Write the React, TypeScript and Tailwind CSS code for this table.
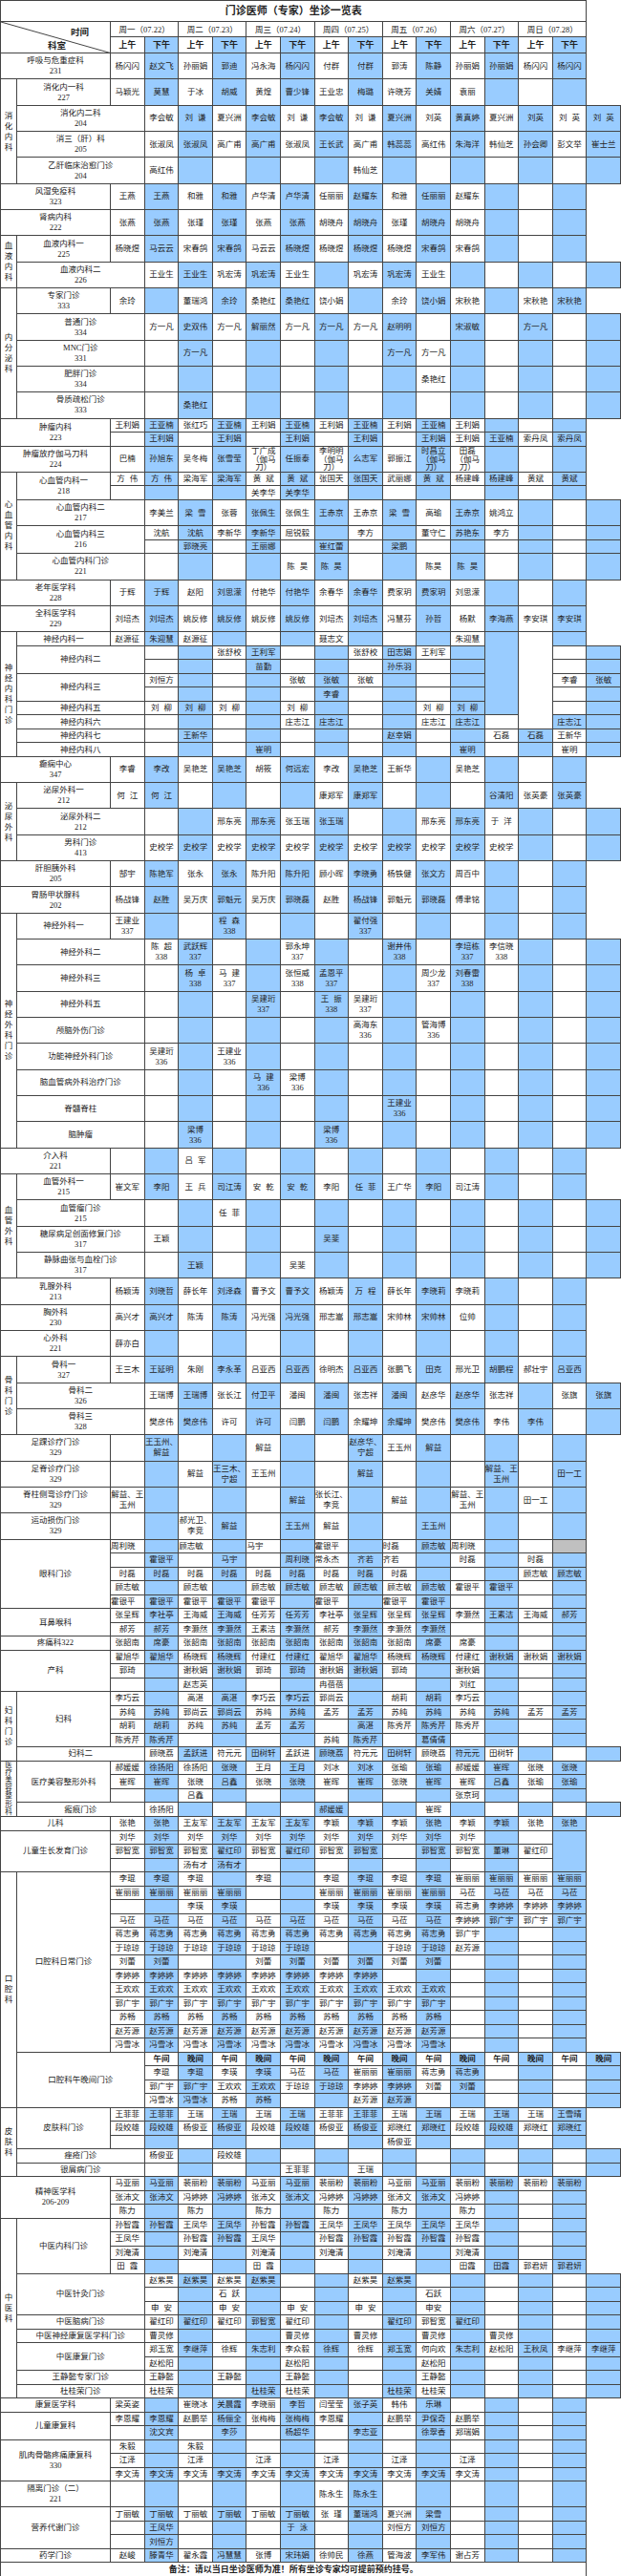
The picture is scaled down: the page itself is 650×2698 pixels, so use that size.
import clsx from "clsx";

type Item = { label: string; rows: string[]; s?: boolean };
type Group = { group: string; items: Item[]; tight?: boolean };
type Block = Item | Group;

const days = [
  "周一（07.22）",
  "周二（07.23）",
  "周三（07.24）",
  "周四（07.25）",
  "周五（07.26）",
  "周六（07.27）",
  "周日（07.28）",
];

const rep = (name: string, n: number) => Array(n).fill(name).join(" ");

// "-" empty, "^" covered by rowspan above, "#N" empty cell spanning N rows,
// "%" grey cell, "_" gap inside a name, "/" line break, "<" left aligned, "*" bold
const blocks: Block[] = [
  { label: "呼吸与危重症科/231", rows: ["杨闪闪 赵文飞 孙丽娟 郭迪 冯永海 杨闪闪 付群 付群 郭涛 陈静 孙丽娟 孙丽娟 杨闪闪 杨闪闪"] },
  {
    group: "消化内科",
    items: [
      { label: "消化内一科/227", rows: ["马颖光 莫慧 于冰 胡威 黄煌 曹少锋 王业忠 梅璐 许晓芳 关婧 袁丽"] },
      { label: "消化内二科/204", rows: ["李会敏 刘_谦 夏兴洲 李会敏 刘_谦 李会敏 刘_谦 夏兴洲 刘英 黄真婷 夏兴洲 刘英 刘_英 刘_英"] },
      { label: "消三（肝）科/205", rows: ["张淑凤 张淑凤 高广甫 高广甫 张淑凤 王长武 高广甫 韩蕊蕊 高红伟 朱海洋 韩仙芝 孙会卿 彭文举 崔士兰"] },
      { label: "乙肝临床治愈门诊/204", rows: ["高红伟 - - - - - 韩仙芝"] },
    ],
  },
  { label: "风湿免疫科/323", rows: ["王燕 王燕 和雅 和雅 卢华清 卢华清 任丽丽 赵耀东 和雅 任丽丽 赵耀东"] },
  { label: "肾病内科/222", rows: ["张燕 张燕 张瑾 张瑾 张燕 张燕 胡晓舟 胡晓舟 张瑾 胡晓舟 胡晓舟"] },
  {
    group: "血液内科",
    items: [
      { label: "血液内科一/225", rows: ["杨晓煜 马云云 宋春鸽 宋春鸽 马云云 杨晓煜 杨晓煜 杨晓煜 杨晓煜 宋春鸽 宋春鸽"] },
      { label: "血液内科二/226", rows: ["王业生 王业生 巩宏涛 巩宏涛 王业生 - 巩宏涛 巩宏涛 王业生"] },
    ],
  },
  {
    group: "内分泌科",
    items: [
      { label: "专家门诊/333", rows: ["余玲 - 董瑞鸿 余玲 桑艳红 桑艳红 饶小娟 - 余玲 饶小娟 宋秋艳 - 宋秋艳 宋秋艳"] },
      { label: "普通门诊/334", rows: ["方一凡 史双伟 方一凡 解丽然 方一凡 方一凡 方一凡 赵明明 - 宋淑敏 - 方一凡"] },
      { label: "MNC门诊/331", rows: ["- 方一凡 - - - - - 方一凡 方一凡"] },
      { label: "肥胖门诊/334", rows: ["- - - - - - - - 桑艳红"] },
      { label: "骨质疏松门诊/333", rows: ["- 桑艳红"] },
    ],
  },
  {
    label: "肿瘤内科/223",
    rows: [
      "王利娟 王亚楠 张红巧 王亚楠 王利娟 王亚楠 王利娟 王亚楠 王利娟 王亚楠 王利娟",
      "- 王利娟 - 王利娟 - 王利娟 - 王利娟 - 王利娟 王利娟 王亚楠 索丹凤 索丹凤",
    ],
  },
  {
    label: "肿瘤放疗伽马刀科/224",
    rows: ["巴楠 孙旭东 吴冬梅 张雪莹 丁广成/（伽马/刀） 任振泰 李明明/（伽马/刀） 么志军 郭振江 时昌立/（伽马/刀） 田磊/（伽马/刀）"],
  },
  {
    group: "心血管内科",
    items: [
      {
        label: "心血管内科一/218",
        rows: ["方_伟 方_伟 梁海军 梁海军 黄_斌 黄_斌 张国天 张国天 武丽娜 黄_斌 杨建峰 杨建峰 黄斌 黄斌", "- - - - 关李华 关李华"],
      },
      { label: "心血管内科二/217", rows: ["李美兰 梁_雪 张蓉 张佩生 张佩生 王赤京 王赤京 梁_雪 高瑜 王赤京 姚鸿立"] },
      {
        label: "心血管内科三/216",
        rows: ["沈航 沈航 李新华 李新华 屈锐毅 - 李方 - 董守仁 苏艳东 李方", "- 郭晓亮 - 王丽娜 - 崔红蕾 - 梁鹏"],
      },
      { label: "心血管内科门诊/221", rows: ["- - - - 陈_昊 陈_昊 - - 陈昊 陈_昊"] },
    ],
  },
  { label: "老年医学科/228", rows: ["于辉 于辉 赵阳 刘思濛 付艳华 付艳华 余春华 余春华 费家玥 费家玥 刘思濛"] },
  { label: "全科医学科/229", rows: ["刘培杰 刘培杰 姚反修 姚反修 姚反修 姚反修 刘培杰 刘培杰 冯慧芬 孙哲 杨默 李海燕 李安琪 李安琪"] },
  {
    group: "神经内科门诊",
    items: [
      { label: "神经内科一", s: true, rows: ["赵源征 朱迎慧 赵源征 - - - 聂志文 - - - 朱迎慧 #6 #7 -"] },
      {
        label: "神经内科二",
        rows: ["- - 张舒校 王利军 - - 张舒校 田志娟 王利军 - - ^ ^ -", "- - - 苗勤 - - - 孙乐羽 - - - ^ ^ -"],
      },
      {
        label: "神经内科三",
        rows: ["刘恒方 - - - 张敏 张敏 张敏 - - - 李睿 ^ ^ 张敏", "- - - - - 李睿 - - - - - ^ ^ -"],
      },
      { label: "神经内科五", s: true, rows: ["刘_柳 刘_柳 刘_柳 - 刘_柳 - - - 刘_柳 刘_柳 - ^ ^ -"] },
      { label: "神经内科六", s: true, rows: ["- - - - 庄志江 庄志江 - - 庄志江 庄志江 - 庄志江 ^ -"] },
      { label: "神经内科七", s: true, rows: ["- 王新华 - - - - - 赵幸娟 - - 石磊 石磊 王新华 -"] },
      { label: "神经内科八", s: true, rows: ["- - - 崔明 - - - - - 崔明 - - 崔明 -"] },
    ],
  },
  { label: "癫痫中心/347", rows: ["李睿 李改 吴艳芝 吴艳芝 胡筱 何远宏 李改 吴艳芝 王新华 - 吴艳芝"] },
  {
    group: "泌尿外科",
    items: [
      { label: "泌尿外科一/212", rows: ["何_江 何_江 - - - - 康郑军 康郑军 - - - 谷清阳 张英豪 张英豪"] },
      { label: "泌尿外科二/212", rows: ["- - 邢东亮 邢东亮 张玉瑞 张玉瑞 - - 邢东亮 邢东亮 于_洋"] },
      { label: "男科门诊/413", rows: [rep("史校学", 11)] },
    ],
  },
  { label: "肝胆胰外科/205", rows: ["郜宇 陈艳军 张永 张永 陈升阳 陈升阳 顾小晖 李晓勇 杨铁健 张文方 周百中"] },
  { label: "胃肠甲状腺科/202", rows: ["杨战锋 赵胜 吴万庆 郭魁元 吴万庆 郭晓磊 赵胜 杨战锋 郭魁元 郭晓磊 傅聿铭"] },
  {
    group: "神经外科门诊",
    items: [
      { label: "神经外科一", rows: ["王建业/337 - - 程_森/338 - - - 翟付强/337"] },
      { label: "神经外科二", rows: ["陈_超/338 武跃辉/337 - - 郭永坤/337 - - 谢井伟/338 - 李培栋/337 李信晓/338"] },
      { label: "神经外科三", rows: ["- 杨_卓/338 马_建/337 - 张恒威/338 孟恩平/337 - - 周少龙/337 刘春雷/338"] },
      { label: "神经外科五", rows: ["- - - 吴建珩/337 - 王_振/338 吴建珩/337"] },
      { label: "颅脑外伤门诊", rows: ["- - - - - - 高海东/336 - 管海博/336"] },
      { label: "功能神经外科门诊", rows: ["吴建珩/336 - 王建业/336"] },
      { label: "脑血管病外科治疗门诊", rows: ["- - - 马_建/336 梁博/336"] },
      { label: "脊髓脊柱", rows: ["- - - - - - - 王建业/336"] },
      { label: "脑肿瘤", rows: ["- 梁博/336 - - - 梁博/336"] },
    ],
  },
  { label: "介入科/221", rows: ["- - 吕_军"] },
  {
    group: "血管外科",
    items: [
      { label: "血管外科一/215", rows: ["崔文军 李阳 王_兵 司江涛 安_乾 安_乾 李阳 任_菲 王广华 李阳 司江涛"] },
      { label: "血管瘤门诊/215", rows: ["- - 任_菲"] },
      { label: "糖尿病足创面修复门诊/317", rows: ["王颖 - - - - 吴斐"] },
      { label: "静脉曲张与血栓门诊/317", rows: ["- 王颖 - - 吴斐"] },
    ],
  },
  { label: "乳腺外科/213", rows: ["杨颖涛 刘晓哲 薛长年 刘泽森 曹予文 曹予文 杨颖涛 万_程 薛长年 李晓莉 李晓莉"] },
  { label: "胸外科/230", rows: ["高兴才 高兴才 陈涛 陈涛 冯光强 冯光强 邢志嵩 邢志嵩 宋帅林 宋帅林 位帅"] },
  { label: "心外科/221", rows: ["薛亦白"] },
  {
    group: "骨科门诊",
    items: [
      { label: "骨科一/327", rows: ["王三木 王延明 朱刚 李永革 吕亚西 吕亚西 徐明杰 吕亚西 张鹏飞 田克 邢光卫 胡鹏程 郝壮宇 吕亚西"] },
      { label: "骨科二/326", rows: ["王瑞博 王瑞博 张长江 付卫平 潘闽 潘闽 张志祥 潘闽 赵彦华 赵彦华 张志祥 - 张旗 张旗"] },
      { label: "骨科三/328", rows: ["樊彦伟 樊彦伟 许可 许可 闫鹏 闫鹏 余耀坤 余耀坤 樊彦伟 樊彦伟 李伟 李伟"] },
    ],
  },
  { label: "足踝诊疗门诊/329", rows: ["- 王玉州、/解益 - - 解益 - - 赵彦华、/宁超 王玉州 解益"] },
  { label: "足脊诊疗门诊/329", rows: ["- - 解益 王三木、/宁超 王玉州 - - 解益 - - - 解益、王/玉州 - 田一工"] },
  { label: "脊柱侧弯诊疗门诊/329", rows: ["解益、王/玉州 - - - - 解益 张长江、/李竞 - 解益 - 解益、王/玉州 - 田一工 -"] },
  { label: "运动损伤门诊/329", rows: ["- - 郝光卫、/李竞 解益 - 王玉州 解益 - - 王玉州"] },
  {
    label: "眼科门诊",
    rows: [
      "<周利晓 - <顾志敏 - <马宇 - <霍银平 - <时磊 顾志敏 <周利晓 - - %",
      "- 霍银平 - 马宇 - 周利晓 <常永杰 齐若 <齐若 - 时磊 - 时磊 -",
      `${rep("时磊", 9)} - - - 顾志敏 顾志敏`,
      "顾志敏 - 顾志敏 - 顾志敏 顾志敏 顾志敏 顾志敏 顾志敏 顾志敏 霍银平 霍银平",
      "<霍银平 霍银平 霍银平 霍银平 霍银平 - <霍银平 - <霍银平 霍银平",
    ],
  },
  {
    label: "耳鼻喉科",
    rows: [
      "张呈辉 李社亭 王海威 王海威 任芳芳 任芳芳 李社亭 张呈辉 张呈辉 张呈辉 李灏然 王素洁 王海威 郝芳",
      "郝芳 郝芳 李灏然 李灏然 王素洁 李灏然 郝芳 李灏然 李灏然 李灏然",
    ],
  },
  { label: "疼痛科322", s: true, rows: ["张韶南 席豪 张韶南 张韶南 张韶南 张韶南 张韶南 张韶南 张韶南 席豪 席豪"] },
  {
    label: "产科",
    rows: [
      "翟旭华 翟旭华 杨晓辉 杨晓辉 付建红 付建红 翟旭华 翟旭华 杨晓辉 杨晓辉 付建红 谢秋娟 谢秋娟 谢秋娟",
      "郭琦 - 谢秋娟 谢秋娟 郭琦 郭琦 谢秋娟 谢秋娟 郭琦 - 谢秋娟",
      "- - 赵志英 - - - 冉蓓蓓 - - - 刘红",
    ],
  },
  {
    group: "妇科门诊",
    items: [
      {
        label: "妇科",
        rows: [
          "李巧云 - 高湛 高湛 李巧云 李巧云 郭尚云 - 胡莉 胡莉 李巧云",
          "苏纯 苏纯 郭尚云 郭尚云 苏纯 苏纯 孟芳 孟芳 苏纯 苏纯 苏纯 苏纯 孟芳 孟芳",
          "胡莉 胡莉 苏纯 苏纯 孟芳 孟芳 - 高湛 陈秀芹 陈秀芹 陈秀芹",
          "陈秀芹 陈秀芹 - - - - 苏纯 陈秀芹 - 葛倩倩",
        ],
      },
      { label: "妇科二", s: true, rows: ["顾晓荔 孟跃进 符元元 田树轩 孟跃进 顾晓荔 符元元 田树轩 顾晓荔 符元元 田树轩"] },
    ],
  },
  {
    group: "医疗美容整形科",
    tight: true,
    items: [
      {
        label: "医疗美容整形外科",
        rows: [
          "郝媛媛 徐扬阳 徐扬阳 张晓 王月 王月 刘冰 刘冰 张瑜 张瑜 郝媛媛 崔晖 张晓 张晓",
          "崔晖 崔晖 张晓 吕鑫 张晓 张晓 崔晖 崔晖 张晓 崔晖 崔晖 吕鑫 张瑜 张瑜",
          "- - 吕鑫 - - - - - - - 张京珂",
        ],
      },
      { label: "瘢痕门诊", s: true, rows: ["徐扬阳 - - - - 郝媛媛 - - 崔晖"] },
    ],
  },
  { label: "儿科", s: true, rows: ["张艳 张艳 王友军 王友军 王友军 王友军 李颖 李颖 李颖 张艳 李颖 李颖 张艳 张艳"] },
  {
    label: "儿童生长发育门诊",
    rows: [
      `${rep("刘华", 11)} - - #3`,
      "郭智宽 郭智宽 郭智宽 翟红印 郭智宽 翟红印 郭智宽 郭智宽 - 郭智宽 郭智宽 董琳 翟红印 ^",
      "- - 汤有才 汤有才 - - - - - - - - - ^",
    ],
  },
  {
    group: "口腔科",
    items: [
      {
        label: "口腔科日常门诊",
        rows: [
          "李琨 李琨 李琨 - 李琨 - 李琨 李琨 李琨 李琨 崔丽丽 崔丽丽 崔丽丽 崔丽丽",
          "崔丽丽 崔丽丽 崔丽丽 崔丽丽 - - 崔丽丽 崔丽丽 崔丽丽 崔丽丽 马莅 马莅 马莅 马莅",
          "- - 李瑛 李瑛 - - 李瑛 李瑛 李瑛 李瑛 蒋志勇 李婷婷 李婷婷 李婷婷",
          `${rep("马莅", 10)} 李婷婷 郭广宇 郭广宇 郭广宇`,
          `${rep("蒋志勇", 10)} 郭广宇`,
          `${rep("于琼琼", 6)} - - 于琼琼 于琼琼 赵芳源`,
          "刘蕾 刘蕾 - - 刘蕾 刘蕾 刘蕾 刘蕾 刘蕾 刘蕾",
          rep("李婷婷", 8),
          rep("王欢欢", 10),
          rep("郭广宇", 10),
          rep("苏畅", 10),
          rep("赵芳源", 10),
          rep("冯雪冰", 10),
        ],
      },
      {
        label: "口腔科午晚间门诊",
        rows: [
          rep("*午间 *晚间", 7),
          "李琨 李琨 李瑛 李瑛 马莅 马莅 崔丽丽 崔丽丽 蒋志勇 蒋志勇",
          "郭广宇 郭广宇 王欢欢 王欢欢 于琼琼 于琼琼 李婷婷 李婷婷 刘蕾 刘蕾",
          "冯雪冰 冯雪冰 苏畅 苏畅 - - 赵芳源 赵芳源",
        ],
      },
    ],
  },
  {
    group: "皮肤科",
    items: [
      {
        label: "皮肤科门诊",
        rows: [
          "王菲菲 王菲菲 王瑞 王瑞 王瑞 王瑞 王菲菲 王菲菲 王瑞 王瑞 王瑞 王瑞 王瑞 王雪晴",
          "段姣雄 段姣雄 杨俊亚 杨俊亚 段姣雄 段姣雄 杨俊亚 杨俊亚 郑晓红 郑晓红 段姣雄 段姣雄 郑晓红 郑晓红",
          "- - - - - - - - 杨俊亚",
        ],
      },
      { label: "痤疮门诊", s: true, rows: ["杨俊亚 - 段姣雄"] },
      { label: "银屑病门诊", s: true, rows: ["- - - - 王菲菲 - 王瑞"] },
    ],
  },
  {
    label: "精神医学科/206-209",
    rows: [
      "马亚丽 马亚丽 裴丽粉 裴丽粉 马亚丽 马亚丽 裴丽粉 裴丽粉 马亚丽 马亚丽 裴丽粉 裴丽粉 裴丽粉 裴丽粉",
      "张沛文 张沛文 冯婷婷 冯婷婷 张沛文 张沛文 冯婷婷 冯婷婷 张沛文 张沛文 冯婷婷",
      "陈力 - 陈力 - 陈力 - 陈力 - 陈力 - 陈力",
    ],
  },
  {
    group: "中医科",
    items: [
      {
        label: "中医内科门诊",
        rows: [
          "孙智霞 孙智霞 王凤华 王凤华 孙智霞 孙智霞 王凤华 王凤华 王凤华 王凤华 王凤华",
          "王凤华 - 孙智霞 孙智霞 王凤华 - 孙智霞 孙智霞 孙智霞 孙智霞 孙智霞",
          "刘淹清 - 刘淹清 - 刘淹清 - 刘淹清 - 刘淹清 - 刘淹清",
          "田_霞 - - - 田_霞 - - - - - 田霞 田霞 郭君妍 郭君妍",
        ],
      },
      {
        label: "中医针灸门诊",
        rows: ["赵紫昊 赵紫昊 赵紫昊 赵紫昊 - - 赵紫昊 赵紫昊", "- - 石_跃 - - - - - 石跃", "申_安 - 申_安 - 申_安 - 申_安 - 申安"],
      },
      { label: "中医脑病门诊", s: true, rows: ["翟红印 翟红印 翟红印 郭智宽 翟红印 - - 翟红印 郭智宽 翟红印"] },
      { label: "中医神经康复医学科门诊", s: true, rows: ["曹灵修 - - - 曹灵修 - 曹灵修 - 曹灵修 - 曹灵修"] },
      {
        label: "中医康复门诊",
        rows: ["郑玉宽 李继萍 徐辉 朱志利 李众毅 徐辉 徐辉 郑玉宽 何向欢 朱志利 赵松阳 王秋凤 李继萍 李继萍", "赵松阳 - - - 赵松阳 - - - 赵松阳"],
      },
      { label: "王静懿专家门诊", s: true, rows: ["王静懿 - 王静懿 - 王静懿 - - - 王静懿"] },
      { label: "杜桂荣门诊", s: true, rows: ["杜桂荣 - - 杜桂荣 杜桂荣 - - 杜桂荣 杜桂荣"] },
    ],
  },
  { label: "康复医学科", s: true, rows: ["梁英姿 - 崔晓冰 关晨霞 李晓丽 李哲 闫莹莹 张子英 韩伟 乐琳"] },
  {
    label: "儿童康复科",
    rows: ["李恩耀 李恩耀 赵鹏举 杨俪全 张梅梅 张梅梅 李恩耀 - 赵鹏举 尹保奇 赵鹏举", "- 沈文宾 - 李莎 - 杨超华 - 李志亚 - 徐翠香 郑瑞娟"],
  },
  {
    label: "肌肉骨骼疼痛康复科/330",
    rows: ["朱毅 - 朱毅", "江泽 - 江泽 - 江泽 - 江泽 - 江泽 - 江泽", rep("李文涛", 11)],
  },
  { label: "隔离门诊（二）/221", rows: ["- - - - - - 陈永生 陈永生"] },
  {
    label: "营养代谢门诊",
    rows: ["丁丽敏 丁丽敏 丁丽敏 丁丽敏 丁丽敏 丁丽敏 张_瑾 董瑞鸿 夏兴洲 梁雪", "- 王凤华 - - - 于_泳 - - 刘恒方 刘恒方", "- 刘恒方"],
  },
  { label: "药学门诊", s: true, rows: ["赵峻 滕青华 翟永霞 冯慧慧 张博 宋玮娟 徐帅民 徐燕 管海波 李军伟 谢占芳"] },
];

const line = "border border-[#444] p-0";

const tokens = (row: string) => {
  const t = row.trim().split(/\s+/);
  while (t.length < 14) t.push("-");
  return t;
};

const Name = ({ text }: { text: string }) => {
  const parts = text.split("_");
  return (
    <>
      {parts.map((p, i) => (
        <span key={i}>
          {i > 0 && <span className="inline-block w-[5px]" />}
          {p}
        </span>
      ))}
    </>
  );
};

function dataCell(tok: string, i: number) {
  if (tok === "^") return null;
  let bg = i % 2 === 1 ? "bg-[#99ccff]" : "bg-white";
  if (tok === "%") bg = "bg-[#c0c0c0]";
  let rowSpan: number | undefined;
  let text = tok;
  if (tok.startsWith("#")) {
    rowSpan = Number(tok.slice(1));
    text = "";
  }
  if (tok === "-" || tok === "%") text = "";
  const left = text.startsWith("<");
  if (left) text = text.slice(1);
  const bold = text.startsWith("*");
  if (bold) text = text.slice(1);
  const lines = text ? text.split("/") : [];
  return (
    <td
      key={i}
      rowSpan={rowSpan}
      className={clsx(
        line,
        bg,
        left ? "text-left" : "text-center",
        bold && "font-bold",
        lines.length > 2 ? "leading-[8.5px]" : "leading-[11px]"
      )}
    >
      {lines.map((l, k) => (
        <div key={k}>
          <Name text={l} />
        </div>
      ))}
    </td>
  );
}

const Label = ({ text }: { text: string }) => (
  <>
    {text.split("/").map((l, k) => (
      <div key={k}>{l}</div>
    ))}
  </>
);

const VText = ({ text, tight }: { text: string; tight?: boolean }) => (
  <div className={clsx("flex flex-col items-center", tight ? "text-[7.5px] leading-[8.2px]" : "leading-[11px]")}>
    {Array.from(text).map((c, k) => (
      <div key={k}>{c}</div>
    ))}
  </div>
);

function itemRows(item: Item, key: string, group?: { g: Group; total: number }) {
  const single = item.s || item.rows.length > 1;
  return item.rows.map((r, ri) => (
    <tr key={`${key}-${ri}`} className={single ? "h-[14.5px]" : "h-[27.33px]"}>
      {group && ri === 0 && (
        <td rowSpan={group.total} className={clsx(line, "bg-white")}>
          <VText text={group.g.group} tight={group.g.tight} />
        </td>
      )}
      {ri === 0 && (
        <td
          rowSpan={item.rows.length}
          colSpan={group ? 1 : 2}
          className={clsx(line, "bg-white text-center leading-[11px]")}
        >
          <Label text={item.label} />
        </td>
      )}
      {tokens(r).map((t, i) => dataCell(t, i))}
    </tr>
  ));
}

export default function App() {
  const body: React.ReactNode[] = [];
  blocks.forEach((b, bi) => {
    if ("group" in b) {
      const total = b.items.reduce((n, it) => n + it.rows.length, 0);
      b.items.forEach((it, ii) => {
        body.push(...itemRows(it, `${bi}-${ii}`, ii === 0 ? { g: b, total } : undefined).map((row, ri) => row));
        if (ii > 0) return;
      });
    } else {
      body.push(...itemRows(b, `${bi}`));
    }
  });

  return (
    <div className="w-[650px] bg-white font-['Liberation_Serif','Noto_Sans_CJK_SC',serif] text-[8.5px] text-[#222]">
      <table className="w-[650px] table-fixed border-collapse">
        <colgroup>
          <col className="w-[17px]" />
          <col className="w-[98px]" />
          {Array.from({ length: 14 }).map((_, i) => (
            <col key={i} />
          ))}
        </colgroup>
        <tbody>
          <tr className="h-[21.7px]">
            <td colSpan={16} className={clsx(line, "bg-white text-center text-[11px] font-bold leading-[14px]")}>
              门诊医师（专家）坐诊一览表
            </td>
          </tr>
          <tr className="h-[16.7px]">
            <td colSpan={2} rowSpan={2} className={clsx(line, "relative bg-white align-top")}>
              <svg className="absolute inset-0 h-full w-full" viewBox="0 0 100 100" preserveAspectRatio="none">
                <line x1="0" y1="0" x2="100" y2="100" stroke="#444" strokeWidth="1" vectorEffect="non-scaling-stroke" />
              </svg>
              <div className="relative flex flex-col text-[9.5px] font-bold leading-[14px]">
                <div className="pl-[73px] pt-[4px]">时间</div>
                <div className="pl-[49px]">科室</div>
              </div>
            </td>
            {days.map((d) => (
              <td key={d} colSpan={2} className={clsx(line, "bg-white text-center leading-[12px]")}>
                {d}
              </td>
            ))}
          </tr>
          <tr className="h-[16.7px]">
            {Array.from({ length: 14 }).map((_, i) => (
              <td
                key={i}
                className={clsx(line, "text-center text-[9px] font-bold leading-[12px]", i % 2 ? "bg-[#99ccff]" : "bg-white")}
              >
                {i % 2 ? "下午" : "上午"}
              </td>
            ))}
          </tr>
          {body}
          <tr className="h-[15px]">
            <td colSpan={16} className={clsx(line, "bg-white text-center text-[9px] font-bold leading-[12px]")}>
              备注：请以当日坐诊医师为准！所有坐诊专家均可提前预约挂号。
            </td>
          </tr>
        </tbody>
      </table>
    </div>
  );
}
